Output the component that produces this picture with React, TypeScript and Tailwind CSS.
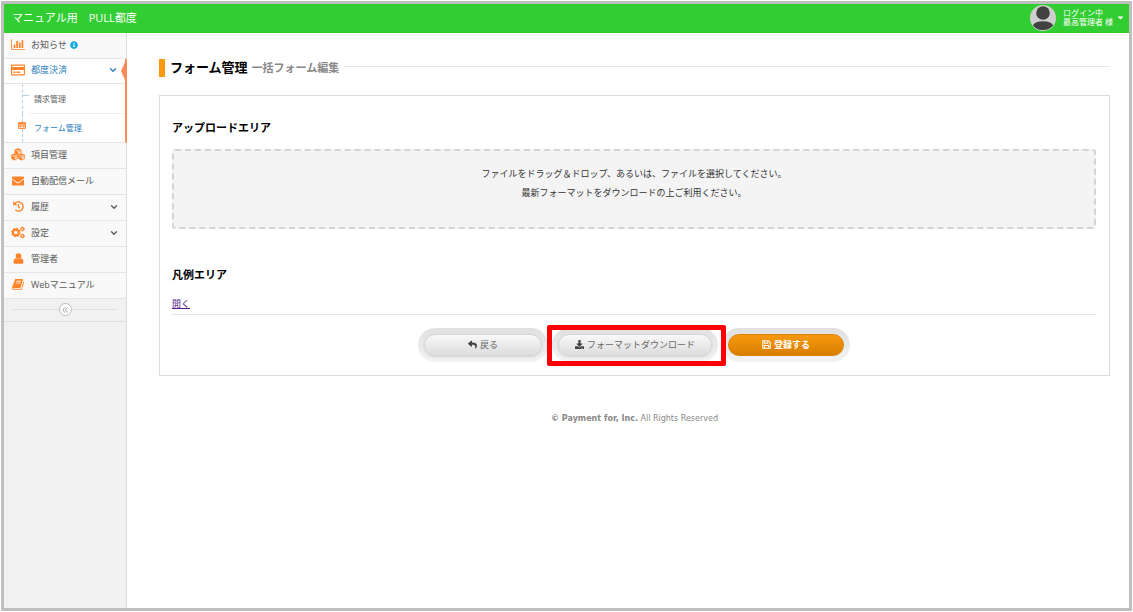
import { useState, type ReactNode } from 'react';
import { FaCaretDown, FaDownload, FaEnvelope, FaHistory, FaInfoCircle, FaRegCreditCard, FaReply } from 'react-icons/fa';
import { ChevronDown } from 'lucide-react';

function BarChartIcon() {
  return (
    <svg viewBox="0 0 2048 1536" className="h-[11px] w-[14px]" fill="currentColor" aria-hidden="true">
      <path d="M640 768v512h-256v-512h256zM1024 256v1024h-256v-1024h256zM2048 1408v128h-2048v-1536h128v1408h1920zM1408 512v768h-256v-768h256zM1792 128v1152h-256v-1152h256z" />
    </svg>
  );
}

function BookIcon() {
  return (
    <svg viewBox="0 0 1792 1792" className="size-[13px]" fill="currentColor" aria-hidden="true">
      <path d="M1639 478q40 57 18 129l-275 906q-19 64-76.5 107.5t-122.5 43.5h-923q-77 0-148.5-53.5t-99.5-131.5q-24-67-2-127 0-4 3-27t4-37q1-8-3-21.5t-3-19.5q2-11 8-21t16.5-23.5 16.5-23.5q23-38 45-91.5t30-91.5q3-10 .5-30t-.5-28q3-11 17-28t17-23q21-36 42-92t25-90q1-9-2.5-32t.5-28q4-13 22-30.5t22-22.5q19-26 42.5-84.5t27.5-96.5q1-8-3-25.5t-2-26.5q2-8 9-18t18-23 17-21q8-12 16.5-30.5t15-35 16-36 19.5-32 26.5-23.5 36-11.5 47.5 5.5l-1 3q38-9 51-9h761q74 0 114 56t18 130l-274 906q-36 119-71.5 153.5t-128.5 34.5h-869q-27 0-38 15-11 16-1 43 24 70 144 70h923q29 0 56-15.5t35-41.5l300-987q7-22 5-57 38 15 59 43zm-1064 2q-4 13 2 22.5t20 9.5h608q13 0 25.5-9.5t16.5-22.5l21-64q4-13-2-22.5t-20-9.5h-608q-13 0-25.5 9.5t-16.5 22.5zm-83 256q-4 13 2 22.5t20 9.5h608q13 0 25.5-9.5t16.5-22.5l21-64q4-13-2-22.5t-20-9.5h-608q-13 0-25.5 9.5t-16.5 22.5z" />
    </svg>
  );
}

function Cube({ x, y }: { x: number; y: number }) {
  return (
    <g transform={`translate(${x} ${y})`}>
      <path d="M4 0L7.600 1.500V5.700L4 7.500L.4 5.700V1.500z" fill="currentColor" stroke="currentColor" strokeWidth=".6" strokeLinejoin="round" />
      <path d="M1.300 2.200L4 3.400L6.700 2.200M4.700 4.600V6.200L6.800 5.100V3.600z" fill="#f9f9f9" fillOpacity=".6" stroke="#f9f9f9" strokeWidth=".6" />
    </g>
  );
}

function CubesIcon() {
  return (
    <svg viewBox="0 0 16 14" className="h-[13px] w-[14px]" aria-hidden="true">
      <Cube x={4} y={0} />
      <Cube x={0} y={6} />
      <Cube x={8} y={6} />
    </svg>
  );
}

function CogsIcon() {
  return (
    <svg viewBox="0 0 15 14" className="h-[13px] w-[14px]" fill="none" stroke="currentColor" aria-hidden="true">
      <circle cx="5.200" cy="7" r="3.100" strokeWidth="2.200" />
      <circle cx="5.200" cy="7" r="4.500" strokeWidth="1.300" strokeDasharray="1.767 1.767" />
      <circle cx="12.200" cy="3.200" r="1.500" strokeWidth="1.200" />
      <circle cx="12.200" cy="3.200" r="2.300" strokeWidth=".8" strokeDasharray="1.204 1.204" />
      <circle cx="12.200" cy="10.800" r="1.500" strokeWidth="1.200" />
      <circle cx="12.200" cy="10.800" r="2.300" strokeWidth=".8" strokeDasharray="1.204 1.204" />
    </svg>
  );
}

function UserIcon() {
  return (
    <svg viewBox="0 0 12 12" className="size-[11px]" fill="currentColor" aria-hidden="true">
      <circle cx="6" cy="3.300" r="3.100" />
      <path d="M3.300 5.600C1.300 5.800.6 7.500.6 9.700c0 1.300.8 2.100 2 2.100h6.800c1.200 0 2-.8 2-2.100 0-2.200-.7-3.900-2.700-4.100C8 6.400 7.100 6.900 6 6.900s-2-.5-2.700-1.300z" />
    </svg>
  );
}

function SaveIcon() {
  return (
    <svg viewBox="0 0 12 12" className="size-[9px]" fill="none" stroke="currentColor" strokeWidth="1.400" aria-hidden="true">
      <path d="M1 1h7.800L11 3.200V11H1z" strokeLinejoin="round" />
      <path d="M3.200 1v3.300h4.600V1M3.200 11V7.200h5.600V11" />
    </svg>
  );
}

function TableIcon() {
  return (
    <svg viewBox="0 0 16 14" className="h-[7px] w-[8px]" aria-hidden="true">
      <rect width="16" height="14" rx="2" fill="#ff8c3a" />
      <path d="M2 5h3v2H2zM6 5h4v2H6zM11 5h3v2h-3zM2 8h3v1H2zM6 8h4v1H6zM11 8h3v1h-3zM2 10h3v2H2zM6 10h4v2H6zM11 10h3v2h-3z" fill="#ffe3cd" />
    </svg>
  );
}

function Avatar() {
  return (
    <svg viewBox="0 0 26 26" className="size-[26px]" aria-hidden="true">
      <defs>
        <clipPath id="avatar-clip">
          <circle cx="13" cy="13" r="12.5" />
        </clipPath>
      </defs>
      <circle cx="13" cy="13" r="13" fill="#cfcfcf" />
      <g clipPath="url(#avatar-clip)" fill="#424242">
        <circle cx="13" cy="8" r="6.8" />
        <ellipse cx="13" cy="20.6" rx="10" ry="4.4" />
      </g>
    </svg>
  );
}

type NavItemProps = {
  icon: ReactNode;
  label: string;
  expandable?: boolean;
  badge?: ReactNode;
};

function NavItem({ icon, label, expandable, badge }: NavItemProps) {
  return (
    <li className="border-b border-[#e5e5e5] bg-[#f9f9f9]">
      <a href="#" className="flex h-[25px] items-center pr-[7px] pb-[2px] pl-[7px] text-[#585858]">
        <span className="flex w-[14px] shrink-0 justify-center text-[#ff8328]">{icon}</span>
        <span className="ml-[6px]">{label}</span>
        {badge}
        {expandable && <ChevronDown className="ml-auto size-[10px]" strokeWidth={3} />}
      </a>
    </li>
  );
}

type PillProps = {
  icon: ReactNode;
  label: string;
  width: string;
  primary?: boolean;
};

function Pill({ icon, label, width, primary }: PillProps) {
  const tone = primary
    ? 'border-[#d9820c] bg-linear-to-b from-[#f7990f] to-[#d97d00] font-bold text-white'
    : 'border-[#d6d6d6] bg-linear-to-b from-[#f8f8f8] to-[#dddddd] text-[#666] shadow-sm';
  return (
    <div className="rounded-full bg-linear-to-b from-[#e0e0e0] to-[#f3f3f3] p-[6px]">
      <button
        type="button"
        className={`flex h-[22px] items-center justify-center gap-[3px] rounded-full border pb-px leading-none ${width} ${tone}`}
      >
        {icon}
        <span>{label}</span>
      </button>
    </div>
  );
}

export default function App() {
  const [legendOpen, setLegendOpen] = useState(false);

  return (
    <div
      lang="ja"
      className="flex min-h-screen flex-col bg-white p-px font-['Open_Sans','Noto_Sans_CJK_JP',sans-serif] text-[9px] leading-[19px] text-[#333]"
    >
      <div className="flex grow flex-col border-[3px] border-[#bfbfbf]">
        <header className="flex h-[29px] items-center justify-between bg-[#32cd32] pr-1 pb-[2px] pl-2 text-white">
          <a href="#" className="text-[11px]">
            マニュアル用　PULL都度
          </a>
          <button type="button" className="flex items-center text-left text-[8px] leading-[9px]">
            <Avatar />
            <span className="ml-[7px] flex flex-col pb-[2px]">
              <span>ログイン中</span>
              <span>最高管理者 様</span>
            </span>
            <FaCaretDown className="ml-[3px] size-[9px]" />
          </button>
        </header>

        <div className="flex grow">
          <nav className="w-[123px] shrink-0 border-r border-[#dcdcdc] bg-[#f1f1f1]">
            <ul>
              <NavItem
                icon={<BarChartIcon />}
                label="お知らせ"
                badge={<FaInfoCircle className="ml-[3px] size-[8px] text-[#13a9dc]" />}
              />
              <li className="relative -mr-px border-r-2 border-b border-r-[#fb8a55] border-b-[#e5e5e5] bg-white">
                <a href="#" className="flex h-[24px] items-center pr-[7px] pb-[3px] pl-[7px] text-[#2b7dbc]">
                  <FaRegCreditCard className="size-[14px] shrink-0 text-[#ff8328]" />
                  <span className="ml-[6px]">都度決済</span>
                  <ChevronDown className="ml-auto size-[10px]" strokeWidth={3} />
                </a>
                <svg viewBox="0 0 4 18" className="absolute top-[3px] right-0 h-[18px] w-[4px]" aria-hidden="true">
                  <path d="M4 0L0 9l4 9z" fill="#fb8a55" />
                </svg>
                <ul className="border-t border-[#e5e5e5] text-[8px]">
                  <li className="ml-[18px] flex h-[30px] border-l border-dashed border-[#b4cfe2]">
                    <span className="mt-[11px] w-[6px] border-t border-dashed border-[#b4cfe2]" />
                    <a href="#" className="flex grow items-center border-b border-[#f0f0f0] pb-px pl-[5px] text-[#616161]">
                      請求管理
                    </a>
                  </li>
                  <li className="ml-[18px] flex h-[28px] border-l border-dashed border-[#b4cfe2]">
                    <span className="-ml-[5px] flex w-[16px] pt-[8px]">
                      <TableIcon />
                    </span>
                    <a href="#" className="flex items-center pb-px text-[#2b7dbc]">
                      フォーム管理
                    </a>
                  </li>
                </ul>
              </li>
              <NavItem icon={<CubesIcon />} label="項目管理" />
              <NavItem icon={<FaEnvelope className="size-[12px]" />} label="自動配信メール" />
              <NavItem icon={<FaHistory className="size-[11px]" />} label="履歴" expandable />
              <NavItem icon={<CogsIcon />} label="設定" expandable />
              <NavItem icon={<UserIcon />} label="管理者" />
              <NavItem icon={<BookIcon />} label="Webマニュアル" />
            </ul>
            <div className="flex h-[23px] items-center border-b border-[#dedede] px-[9px] pb-px">
              <span className="grow border-t border-[#dedede]" />
              <button
                type="button"
                aria-label="サイドバーを閉じる"
                className="flex size-[13px] items-center justify-center rounded-full border border-[#bbb] bg-white text-[#999]"
              >
                <svg viewBox="0 0 8 8" className="size-[6px]" fill="none" stroke="currentColor" strokeWidth="1.3" aria-hidden="true">
                  <path d="M4 .5L1 4l3 3.500M7.500 .5l-3 3.500 3 3.500" />
                </svg>
              </button>
              <span className="grow border-t border-[#dedede]" />
            </div>
          </nav>

          <main className="min-w-0 grow pt-[25px] pr-[19px] pl-8">
            <div className="flex h-[19px] items-center">
              <span className="h-[18px] w-[6px] bg-[#f89a10]" />
              <h1 className="ml-[5px] text-[13px] font-bold text-black">フォーム管理</h1>
              <span className="ml-[4px] text-[11px] font-bold text-[#888]">一括フォーム編集</span>
              <span className="mb-[3px] ml-[5px] grow border-t border-[#e6e6e6]" />
            </div>

            <section className="mt-[18px] border border-[#dcdcdc] pt-[22px] pr-[13px] pb-[13px] pl-3">
              <h2 className="text-[11px] font-bold text-black">アップロードエリア</h2>
              <div className="mt-3 h-[80px] rounded-[3px] border-2 border-dashed border-[#d4d4d4] bg-[#f4f4f4] pt-[13px] text-center">
                <p>ファイルをドラッグ＆ドロップ、あるいは、ファイルを選択してください。</p>
                <p>最新フォーマットをダウンロードの上ご利用ください。</p>
              </div>

              <h2 className="mt-9 text-[11px] font-bold text-black">凡例エリア</h2>
              <div className="mt-[10px] border-b border-[#e6e6e6] pb-px">
                <a
                  href="#"
                  aria-expanded={legendOpen}
                  onClick={(event) => {
                    event.preventDefault();
                    setLegendOpen(!legendOpen);
                  }}
                  className="text-[#551a8b] underline"
                >
                  {legendOpen ? '閉じる' : '開く'}
                </a>
              </div>

              <div className="mt-[13px] flex justify-center gap-1">
                <Pill icon={<FaReply className="size-[9px] text-[#444]" />} label="戻る" width="w-[118px]" />
                <div className="relative">
                  <Pill
                    icon={<FaDownload className="size-[9px] text-[#444]" />}
                    label="フォーマットダウンロード"
                    width="w-[154px]"
                  />
                  <span className="pointer-events-none absolute -top-[3px] -right-[8px] -bottom-[4px] -left-[5px] rounded-[2px] border-[5px] border-[#fe0000]" />
                </div>
                <Pill icon={<SaveIcon />} label="登録する" width="w-[116px]" primary />
              </div>
            </section>

            <footer className="mt-[33px] text-center font-['DejaVu_Sans',sans-serif] text-[8px] text-[#888]">
              <b>© Payment for, Inc.</b> All Rights Reserved
            </footer>
          </main>
        </div>
      </div>
    </div>
  );
}
